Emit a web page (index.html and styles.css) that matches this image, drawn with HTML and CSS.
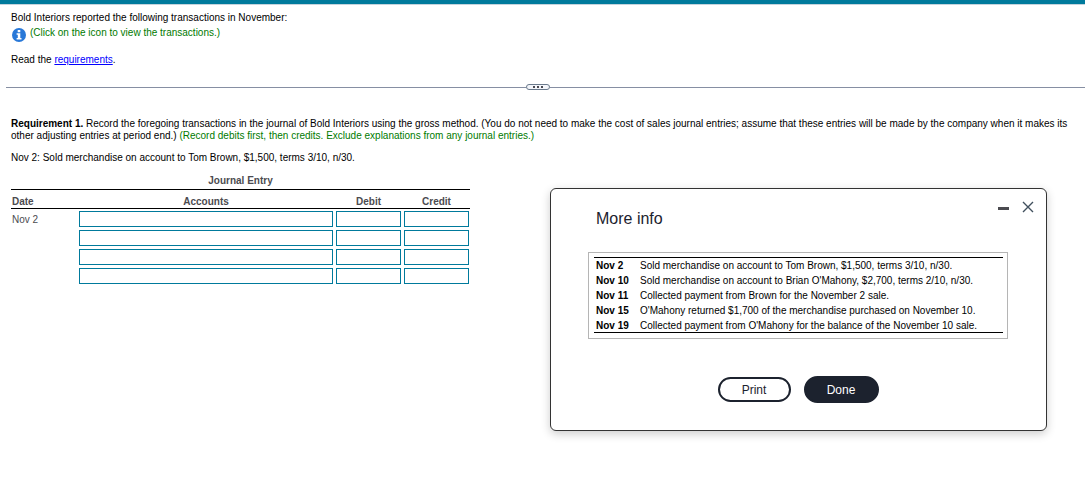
FILE: index.html
```
<!DOCTYPE html>
<html lang="en">
<head>
<meta charset="utf-8">
<title>Bold Interiors</title>
<link rel="stylesheet" href="styles.css">
</head>
<body>
<header class="topbar"></header>
<section class="intro">
  <p class="line">Bold Interiors reported the following transactions in November:</p>
  <p class="hint">
    <svg class="info-icon" viewBox="0 0 14 14" aria-hidden="true"><circle cx="7" cy="7" r="7" fill="#2878d8"/><path d="M5.7 2h2.6v2.3H5.7zM4.6 5.3h3.7v4.6h1.2v1.5H4.6V9.9h1.2V6.8H4.6z" fill="#fff"/></svg>
    <span>(Click on the icon to view the transactions.)</span>
  </p>
  <p class="line">Read the <a href="#requirements">requirements</a>.</p>
</section>
<div class="divider">
  <button class="handle" type="button" aria-label="Resize panels"><i></i><i></i><i></i></button>
</div>
<main class="work">
  <p class="task" id="requirements"><b>Requirement 1.</b> Record the foregoing transactions in the journal of Bold Interiors using the gross method. (You do not need to make the cost of sales journal entries; assume that these entries will be made by the company when it makes its other adjusting entries at period end.) <span class="note">(Record debits first, then credits. Exclude explanations from any journal entries.)</span></p>
  <p class="line">Nov 2: Sold merchandise on account to Tom Brown, $1,500, terms 3/10, n/30.</p>
  <table class="journal">
    <caption>Journal Entry</caption>
    <thead>
      <tr><th class="date">Date</th><th>Accounts</th><th class="debit">Debit</th><th class="credit">Credit</th></tr>
    </thead>
    <tbody>
      <tr><td class="date">Nov 2</td><td><input type="text" aria-label="Account 1"></td><td><input type="text" aria-label="Debit 1"></td><td class="credit"><input type="text" aria-label="Credit 1"></td></tr>
      <tr><td></td><td><input type="text" aria-label="Account 2"></td><td><input type="text" aria-label="Debit 2"></td><td class="credit"><input type="text" aria-label="Credit 2"></td></tr>
      <tr><td></td><td><input type="text" aria-label="Account 3"></td><td><input type="text" aria-label="Debit 3"></td><td class="credit"><input type="text" aria-label="Credit 3"></td></tr>
      <tr><td></td><td><input type="text" aria-label="Account 4"></td><td><input type="text" aria-label="Debit 4"></td><td class="credit"><input type="text" aria-label="Credit 4"></td></tr>
    </tbody>
  </table>
</main>
<section class="dialog" role="dialog" aria-labelledby="dialog-title">
  <div class="controls">
    <button type="button" aria-label="Minimize"><svg viewBox="0 0 12 12" aria-hidden="true"><path d="M0 7.5h11" stroke="#4b4b50" stroke-width="3"/></svg></button>
    <button type="button" aria-label="Close"><svg viewBox="0 0 12 12" aria-hidden="true"><path d="M1 1l10 10M11 1L1 11" stroke="#41505e" stroke-width="1.4"/></svg></button>
  </div>
  <h2 id="dialog-title">More info</h2>
  <div class="frame">
    <table class="events">
      <tr><th>Nov 2</th><td>Sold merchandise on account to Tom Brown, $1,500, terms 3/10, n/30.</td></tr>
      <tr><th>Nov 10</th><td>Sold merchandise on account to Brian O'Mahony, $2,700, terms 2/10, n/30.</td></tr>
      <tr><th>Nov 11</th><td>Collected payment from Brown for the November 2 sale.</td></tr>
      <tr><th>Nov 15</th><td>O'Mahony returned $1,700 of the merchandise purchased on November 10.</td></tr>
      <tr><th>Nov 19</th><td>Collected payment from O'Mahony for the balance of the November 10 sale.</td></tr>
    </table>
  </div>
  <div class="actions">
    <button class="print" type="button">Print</button>
    <button class="done" type="button">Done</button>
  </div>
</section>
</body>
</html>
```

FILE: styles.css
```
* { box-sizing: border-box; }
body {
  margin: 0;
  background: #fff;
  color: #000;
  font: 10px/12px "Liberation Sans", Arial, sans-serif;
}
p { margin: 0; }
.topbar {
  height: 5px;
  background: #007a9c;
  border-bottom: 1px solid #c5d3dc;
}
.intro { padding: 7px 11px 0; }
.hint {
  display: flex;
  gap: 4px;
  height: 18px;
  margin: 3px 0 9px;
  color: #007a00;
}
.info-icon {
  width: 14px;
  height: 14px;
  margin: 1px 0 0 1px;
}
a { color: #00f; }
.divider {
  display: flex;
  align-items: center;
  margin: 17px 0 0 6px;
  height: 8px;
}
.divider::before,
.divider::after {
  content: "";
  height: 1px;
  background: #868fa3;
  flex: 1;
}
.divider::before { flex: 0 1 520px; }
.handle {
  display: flex;
  align-items: center;
  justify-content: center;
  gap: 2px;
  width: 24px;
  height: 6px;
  padding: 0;
  border: 1px solid #6b7a8c;
  border-radius: 3px;
  background: #f4f6fb;
}
.handle i {
  width: 2px;
  height: 2px;
  background: #4a4a52;
}
.work { padding: 27px 11px 0; }
.task { margin-bottom: 10px; }
.note { color: #007a00; }
.journal {
  width: 459px;
  margin-top: 11px;
  border-collapse: collapse;
  table-layout: fixed;
  color: #4b4b50;
}
.journal caption {
  padding-bottom: 2px;
  font-weight: bold;
}
.journal thead {
  border-top: 1px solid #000;
  border-bottom: 1px solid #000;
}
.journal th { padding: 6px 3px 0 0; }
.journal td {
  height: 19px;
  padding: 2px 3px 1px 0;
}
.journal th.date,
.journal td.date {
  width: 68px;
  padding-left: 1px;
  text-align: left;
}
.journal td.date { padding-top: 4px; }
.journal .debit { width: 68px; }
.journal .credit {
  width: 66px;
  padding-right: 1px;
}
.journal input {
  display: block;
  width: 100%;
  height: 16px;
  padding: 0 2px;
  border: 1px solid #007a9c;
  background: #fff;
  font: inherit;
}
.dialog {
  position: absolute;
  top: 188px;
  left: 550px;
  right: 38px;
  padding: 12px 38px 27px 37px;
  border: 1px solid #333;
  border-radius: 6px;
  background: #fff;
  box-shadow: 0 3px 10px #0003;
}
.controls {
  display: flex;
  justify-content: flex-end;
  gap: 12px;
  margin-right: -26px;
}
.controls button {
  width: 12px;
  height: 12px;
  padding: 0;
  border: 0;
  background: none;
}
.controls svg { display: block; }
.dialog h2 {
  margin: -3px 0 24px 8px;
  color: #1c222e;
  font-size: 16px;
  font-weight: normal;
  line-height: 18px;
}
.frame {
  padding: 4px 4px 5px 5px;
  border: 1px solid #b5b5b5;
}
.events {
  width: 100%;
  border-collapse: collapse;
  border-top: 1px solid #000;
  border-bottom: 1px solid #000;
}
.events th,
.events td {
  height: 15px;
  padding: 2px 0 0;
  text-align: left;
}
.events th {
  width: 46px;
  padding-left: 2px;
}
.actions {
  display: flex;
  align-items: center;
  justify-content: center;
  gap: 13px;
  margin-top: 37px;
}
.actions button {
  padding: 0;
  border: 2px solid #1c222e;
  border-radius: 14px;
  font: 12px/14px "Liberation Sans", Arial, sans-serif;
}
.print {
  width: 73px;
  height: 25px;
  background: #fff;
  color: #1c222e;
}
.done {
  width: 75px;
  height: 27px;
  background: #1c222e;
  color: #fff;
}
```
